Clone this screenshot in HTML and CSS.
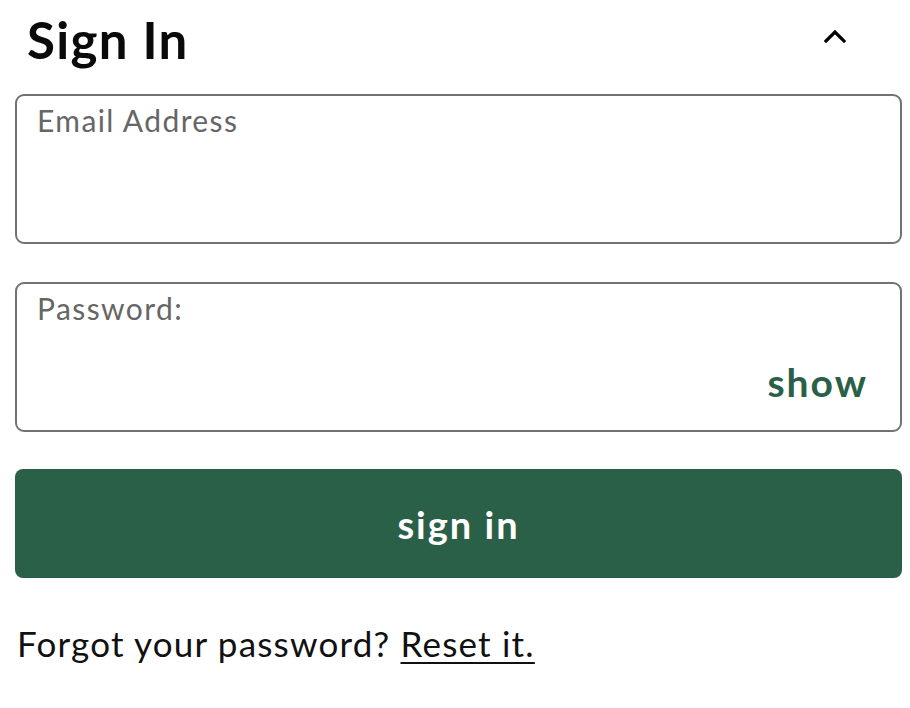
FILE: index.html
```html
<!DOCTYPE html>
<html lang="en">
<head>
<meta charset="utf-8">
<title>Sign In</title>
<link rel="stylesheet" href="styles.css">
</head>
<body>
<main class="panel">
  <div class="panel-head">
    <h1 class="panel-title">Sign In</h1>
    <button class="collapse" type="button" aria-label="Collapse">
      <svg width="22" height="14" viewBox="0 0 22 14" aria-hidden="true"><path d="M2 12 L11 3 L20 12" fill="none" stroke="#000" stroke-width="3.2" stroke-linecap="square"/></svg>
    </button>
  </div>
  <form class="signin-form">
    <label class="field">
      <span class="field-label">Email Address</span>
      <span class="field-row"><input class="field-input" type="email"></span>
    </label>
    <label class="field">
      <span class="field-label">Password:</span>
      <span class="field-row"><input class="field-input" type="password"><span class="show-btn">show</span></span>
    </label>
    <button class="submit" type="button">sign in</button>
  </form>
  <p class="forgot">Forgot your password? <a class="forgot-link" href="#">Reset it.</a></p>
</main>
</body>
</html>
```
FILE: styles.css
```css
html, body {
  margin: 0;
  padding: 0;
  background: #fff;
}
body {
  font-family: Lato, "Noto Sans", sans-serif;
  color: #111;
}
.panel {
  padding: 0 8px 0 15px;
}
.panel-head {
  display: flex;
  align-items: center;
  justify-content: space-between;
  height: 86px;
  padding: 0 56px 0 12px;
}
.panel-title {
  margin: -8px 0 0 0;
  font-size: 51px;
  font-weight: 700;
  letter-spacing: 1.3px;
  line-height: 1;
  color: #0a0a0a;
}
.collapse {
  border: 0;
  background: none;
  padding: 0;
  width: 22px;
  height: 14px;
  margin-top: -14px;
  display: block;
}
.collapse svg { display: block; }
.signin-form {
  display: flex;
  flex-direction: column;
  gap: 38px;
  margin-top: 8px;
}
.field {
  display: flex;
  flex-direction: column;
  height: 150px;
  box-sizing: border-box;
  border: 2px solid #727272;
  border-radius: 9px;
  padding: 6px 34px 0 20px;
}
.field-label {
  font-size: 30px;
  line-height: 36px;
  letter-spacing: 1.4px;
  color: #666;
}
.field-row {
  flex: 1;
  display: flex;
  align-items: center;
}
.field-input {
  flex: 1;
  border: 0;
  outline: 0;
  background: transparent;
  font: inherit;
  font-size: 30px;
  min-width: 0;
  padding: 0;
}
.show-btn {
  font-size: 39px;
  font-weight: 700;
  letter-spacing: 2px;
  color: #2a6047;
  margin-top: 8px;
  margin-right: -2px;
}
.submit {
  height: 109px;
  border: 0;
  border-radius: 8px;
  background: #2a6047;
  color: #fff;
  font-family: inherit;
  font-size: 38px;
  font-weight: 700;
  letter-spacing: 2px;
  margin-top: -1px;
}
.forgot {
  margin: 44px 0 0 2px;
  font-size: 35px;
  letter-spacing: 1.2px;
  color: #111;
}
.forgot-link {
  color: #111;
  text-decoration: underline;
  text-underline-offset: 5px;
  text-decoration-thickness: 2px;
}
```
